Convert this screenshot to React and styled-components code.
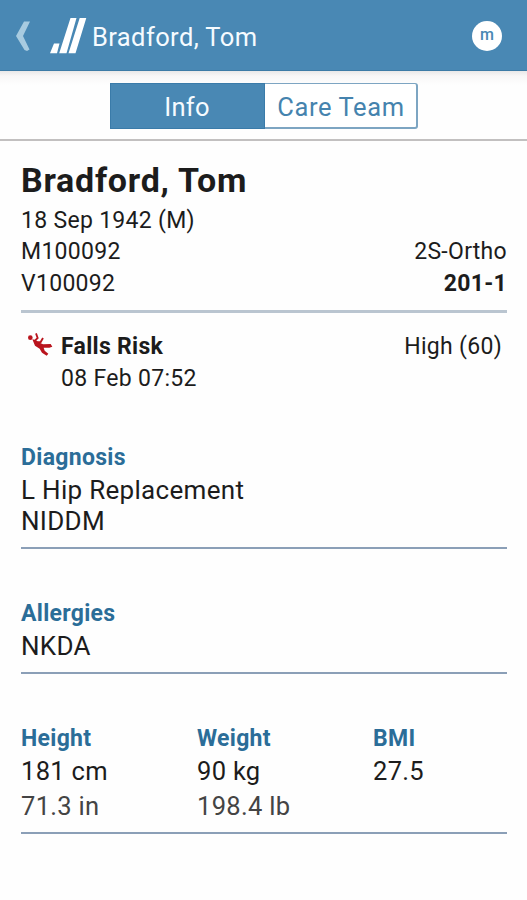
import React from "react";
import styled, { createGlobalStyle } from "styled-components";

const Global = createGlobalStyle`
  * { box-sizing: border-box; }
  body { margin: 0; background: #fefefe; font-family: Roboto, "Liberation Sans", sans-serif; color: #1c1c1c; }
`;

const Screen = styled.div`
  height: 900px;
  overflow: hidden;
  display: flex;
  flex-direction: column;
`;

const Header = styled.header`
  height: 71px;
  flex: none;
  display: flex;
  align-items: center;
  padding: 2px 25px 0 14px;
  background: #4988b4;
  border-bottom: 1px solid #3d7ba6;
  color: #f6fbff;
`;

const BackIcon = styled.svg`
  flex: none;
  width: 18px;
  height: 32px;
`;

const Logo = styled.svg`
  flex: none;
  width: 38px;
  height: 38px;
  margin-left: 17px;
`;

const Title = styled.h1`
  flex: 1;
  margin: 2px 0 0 5px;
  font-size: 25.5px;
  line-height: 32px;
  font-weight: 400;
  letter-spacing: 0.4px;
`;

const Avatar = styled.div`
  width: 30px;
  height: 30px;
  border-radius: 50%;
  background: #fff;
  color: #4988b4;
  display: flex;
  align-items: center;
  justify-content: center;
  font-size: 16px;
  line-height: 20px;
  font-weight: 500;
  padding-bottom: 2px;
`;

const TabBar = styled.nav`
  height: 70px;
  flex: none;
  display: flex;
  justify-content: center;
  align-items: flex-start;
  padding-top: 12px;
  border-bottom: 2px solid #c2c0c0;
  background: linear-gradient(#e9e8e8, #f8f7f7 5px, #fefefe 14px);
`;

const Tab = styled.button`
  width: ${(p) => (p.$active ? 155 : 153)}px;
  height: 46px;
  padding: 2px 0 0;
  border: 1px solid ${(p) => (p.$active ? "#3a7ba9" : "#7da5c2")};
  border-width: ${(p) => (p.$active ? "1px" : "1.5px 2px 2px 0")};
  border-radius: ${(p) => (p.$active ? "0" : "0 3px 3px 0")};
  background: ${(p) => (p.$active ? "#4988b4" : "#fff")};
  color: ${(p) => (p.$active ? "#f6fbff" : "#4583ae")};
  font: 400 25.5px/30px Roboto, "Liberation Sans", sans-serif;
  letter-spacing: ${(p) => (p.$active ? 0.3 : 0.6)}px;
  text-indent: ${(p) => (p.$active ? 0 : 2)}px;
`;

const Content = styled.main`
  padding: 19px 20px 0 21px;
`;

const Name = styled.h2`
  margin: 0 0 4.6px;
  font-size: 34px;
  line-height: 40px;
  font-weight: 700;
  letter-spacing: 0.75px;
`;

const Row = styled.div`
  display: flex;
  justify-content: space-between;
  font-size: 23px;
  line-height: 31.5px;
  letter-spacing: 0.3px;
`;

const Strong = styled.span`
  font-weight: 700;
`;

const Divider = styled.hr`
  height: ${(p) => (p.$light ? 3 : 2)}px;
  margin: 0;
  border: 0;
  background: ${(p) => (p.$light ? "#bac5d0" : "#8b9fb7")};
`;

const Patient = styled.section`
  height: 150px;
`;

const Risk = styled.section`
  display: flex;
  height: 129px;
  padding: 18px 5px 0 5px;
`;

const RiskIcon = styled.svg`
  flex: none;
  width: 28px;
  height: 28px;
  margin: 0 7px 0 0;
`;

const RiskText = styled.div`
  flex: 1;
`;

const Section = styled.section`
  height: ${(p) => p.$height}px;
  padding-top: ${(p) => p.$gap || 0}px;
`;

const Heading = styled.h3`
  margin: 0;
  font-size: 23px;
  line-height: 31px;
  font-weight: 700;
  letter-spacing: 0.3px;
  color: #2b6d98;
`;

const Value = styled.div`
  font-size: 26px;
  line-height: 31px;
  letter-spacing: 0.3px;
  &:nth-child(2) { margin-top: 2px; }
`;

const Measures = styled.div`
  display: grid;
  grid-template-columns: 176px 176px 1fr;
  height: 158px;
  padding-top: 49px;
  ${Value} { line-height: 35px; font-size: 25.5px; }
  ${Value}:nth-child(2) { margin-top: 0; }
  ${Value}:nth-child(3) { color: #444; }
`;

const measures = [
  ["Height", "181 cm", "71.3 in"],
  ["Weight", "90 kg", "198.4 lb"],
  ["BMI", "27.5"],
];

export default function App() {
  return (
    <Screen>
      <Global />
      <Header>
        <BackIcon viewBox="0 0 18 32">
          <path d="M10 1.500H16L9 16 15.500 29.500 13 31 10.500 30 2 16Z" fill="#a8cbe0" />
        </BackIcon>
        <Logo viewBox="49 17 38 38">
          <path d="M70.500 18H76.500L66.500 53.300H59.200Z M79.700 18H86.300L75.500 53.300H68.500Z M54 43.500H59.500L57 53.300H50Z" fill="#fff" />
        </Logo>
        <Title>Bradford, Tom</Title>
        <Avatar>m</Avatar>
      </Header>
      <TabBar>
        <Tab $active>Info</Tab>
        <Tab>Care Team</Tab>
      </TabBar>
      <Content>
        <Patient>
          <Name>Bradford, Tom</Name>
          <Row>18 Sep 1942 (M)</Row>
          <Row><span>M100092</span><span>2S-Ortho</span></Row>
          <Row><span>V100092</span><Strong>201-1</Strong></Row>
        </Patient>
        <Divider $light />
        <Risk>
          <RiskIcon viewBox="18 18 84 84">
            <circle cx="31" cy="38" r="7" fill="#b9141d" />
            <path d="M37 43L47 45 56 52 69 58 92 57 97 65 88 68 71 68 74 77 85 86 80 92 66 83 59 71 45 62Z" fill="#b9141d" />
            <path d="M43 49L53 39 48 25M49 52L62 51 69 39" fill="none" stroke="#b9141d" strokeWidth="5.500" />
          </RiskIcon>
          <RiskText>
            <Row><Strong>Falls Risk</Strong><span>High (60)</span></Row>
            <Row>08 Feb 07:52</Row>
          </RiskText>
        </Risk>
        <Section $height={105}>
          <Heading>Diagnosis</Heading>
          <Value>L Hip Replacement</Value>
          <Value>NIDDM</Value>
        </Section>
        <Divider />
        <Section $height={123} $gap={49}>
          <Heading>Allergies</Heading>
          <Value>NKDA</Value>
        </Section>
        <Divider />
        <Measures>
          {measures.map(([label, ...values]) => (
            <div key={label}>
              <Heading>{label}</Heading>
              {values.map((v) => <Value key={v}>{v}</Value>)}
            </div>
          ))}
        </Measures>
        <Divider />
      </Content>
    </Screen>
  );
}
